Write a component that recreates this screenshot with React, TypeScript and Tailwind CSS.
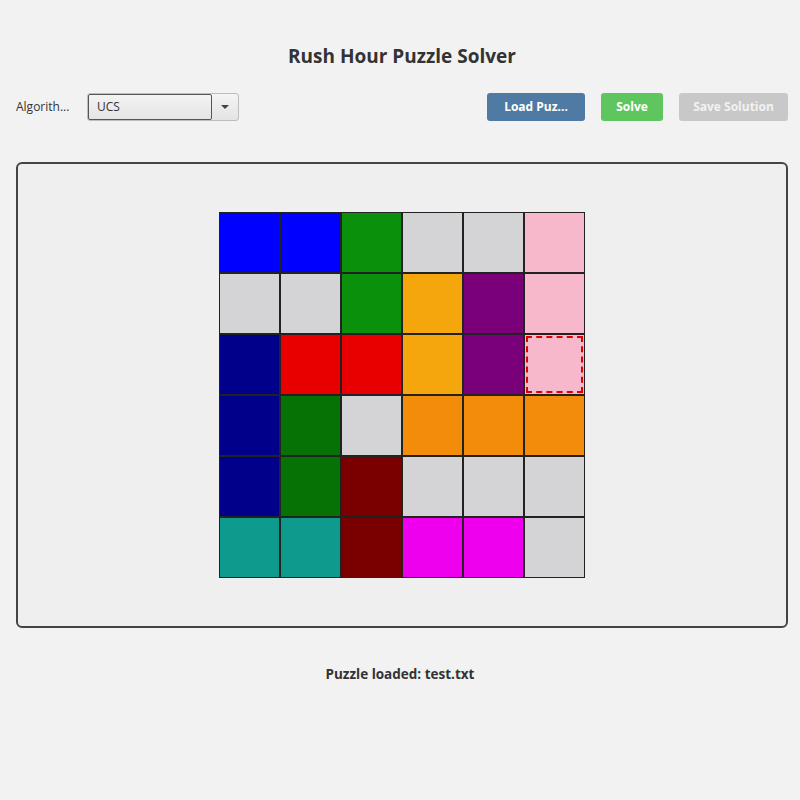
import React from "react";

const GRID: string[][] = [
  ["#0000ff", "#0000ff", "#0a900a", "#d4d3d6", "#d4d3d6", "#f8b8cc"],
  ["#d4d3d6", "#d4d3d6", "#0a900a", "#f5a60c", "#7a007a", "#f8b8cc"],
  ["#00008b", "#e80000", "#e80000", "#f5a60c", "#7a007a", "exit"],
  ["#00008b", "#067206", "#d4d3d6", "#f28c0a", "#f28c0a", "#f28c0a"],
  ["#00008b", "#067206", "#7a0000", "#d4d3d6", "#d4d3d6", "#d4d3d6"],
  ["#0e9a8c", "#0e9a8c", "#7a0000", "#ee00ee", "#ee00ee", "#d4d3d6"],
];

const Cell = ({ color }: { color: string }) => {
  if (color === "exit") {
    return (
      <div className="w-[61px] h-[61px] border border-[#222] bg-[#f8b8cc] p-[1px]">
        <div className="w-full h-full border-2 border-dashed border-[#e00000] bg-[#f8b8cc]" />
      </div>
    );
  }
  return <div className="w-[61px] h-[61px] border border-[#222]" style={{ backgroundColor: color }} />;
};

const App = () => {
  return (
    <div className="w-[800px] h-[800px] bg-[#f2f2f2] text-[#333] font-['Open_Sans',sans-serif] flex flex-col">
      <h1 className="text-center text-[19px] font-bold pt-[42px] leading-[28px] pl-1">Rush Hour Puzzle Solver</h1>

      <div className="flex items-center mt-[23px] pl-4 pr-3 h-[28px]">
        <span className="text-[12px] text-[#333] w-[71px]">Algorith...</span>
        <div className="flex h-[28px] w-[152px] rounded-[3px] border border-[#bdbdbd] bg-gradient-to-b from-[#f4f4f4] to-[#e4e4e4]">
          <div className="flex items-center flex-1 border border-[#555] rounded-[2px] pl-[8px] text-[12px]">UCS</div>
          <div className="w-[26px] flex items-center justify-center">
            <span className="w-0 h-0 border-l-[4px] border-r-[4px] border-t-[4px] border-l-transparent border-r-transparent border-t-[#444]" />
          </div>
        </div>
        <div className="flex-1" />
        <button className="h-[28px] w-[98px] rounded-[3px] bg-[#4f7aa3] text-white text-[12px] font-bold">Load Puz...</button>
        <button className="h-[28px] w-[62px] ml-4 rounded-[3px] bg-[#5fc65f] text-white text-[12px] font-bold">Solve</button>
        <button className="h-[28px] w-[109px] ml-4 rounded-[3px] bg-[#c8c8c8] text-[#f2f2f2] text-[12px] font-bold">Save Solution</button>
      </div>

      <div className="ml-4 mr-3 mt-[41px] h-[466px] border-2 border-[#444] rounded-[6px] bg-[#efefef] flex items-center justify-center">
        <div className="grid grid-cols-6">
          {GRID.flat().map((c, i) => (
            <Cell key={i} color={c} />
          ))}
        </div>
      </div>

      <p className="text-center text-[13.5px] font-bold mt-[36px]">Puzzle loaded: test.txt</p>
    </div>
  );
};

export default App;
